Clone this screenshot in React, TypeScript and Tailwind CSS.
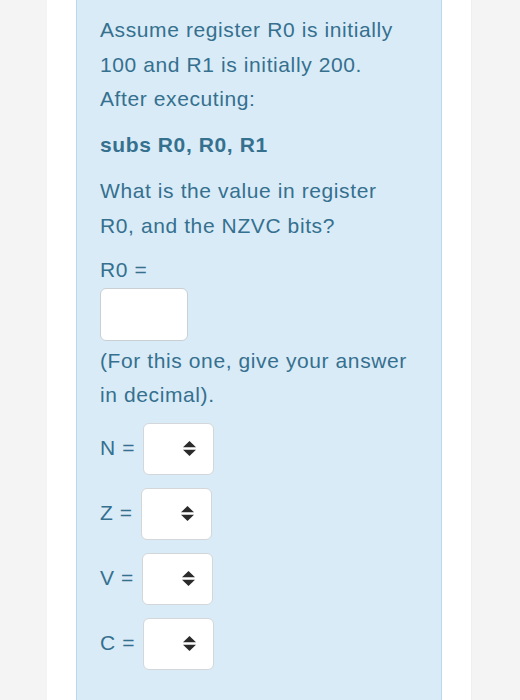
import React from "react";

const bits = ["N", "Z", "V", "C"];

function SortArrows() {
  return (
    <svg width="13" height="15" viewBox="0 0 13 15" className="block">
      <path d="M6.5 0 L13 6.3 L0 6.3 Z" fill="#2b2b2b" />
      <path d="M0 8.7 L13 8.7 L6.5 15 Z" fill="#2b2b2b" />
    </svg>
  );
}

function BitSelect({ label }: { label: string }) {
  return (
    <div className="flex items-center gap-[8px] h-[52px]">
      <span>{label} =</span>
      <div className="w-[71px] h-[52px] bg-white border border-[#d3d7da] rounded-[6px] flex items-center justify-end pr-[17px]">
        <SortArrows />
      </div>
    </div>
  );
}

export default function App() {
  return (
    <div
      className="min-h-[700px] bg-[#f4f4f4] flex"
      style={{ fontFamily: '"Liberation Sans", Arial, sans-serif' }}
    >
      <div className="ml-[47px] w-[425px] bg-white px-[29px] flex flex-col border-r border-[#efefef]">
        <div className="flex-1 bg-[#d9ebf7] border-x border-[#bcd8ea] pl-[23px] pr-[14px] pt-[13px] pb-[40px] text-[#35708f] text-[21px] leading-[34.5px] tracking-[0.6px]">
          <p>
            Assume register R0 is initially
            <br />
            100 and R1 is initially 200.
            <br />
            After executing:
          </p>
          <p className="mt-[11.5px] font-bold">subs R0, R0, R1</p>
          <p className="mt-[11.5px]">
            What is the value in register
            <br />
            R0, and the NZVC bits?
          </p>
          <p className="mt-[10px]">R0 =</p>
          <div className="w-[88px] h-[53px] bg-white border-[1.5px] border-[#c9cfd3] rounded-[6px]" />
          <p className="mt-[3px]">
            (For this one, give your answer
            <br />
            in decimal).
          </p>
          <div className="mt-[10px] flex flex-col gap-[13px]">
            {bits.map((b) => (
              <BitSelect key={b} label={b} />
            ))}
          </div>
        </div>
      </div>
    </div>
  );
}
